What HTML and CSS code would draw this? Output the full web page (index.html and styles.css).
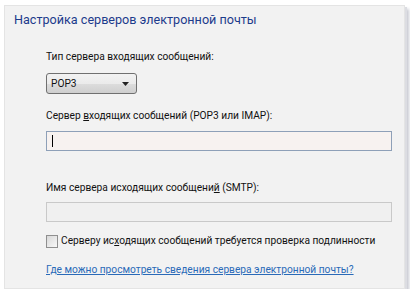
FILE: index.html
```html
<!DOCTYPE html>
<html lang="ru">
<head>
    <meta charset="UTF-8">
    <title>Настройка серверов электронной почты</title>
    <link rel="stylesheet" href="styles.css">
</head>
<body>
    <div class="panel">
        <h1 class="title">Настройка серверов электронной почты</h1>

        <div class="form">
            <label class="label">Тип сервера входящих сообщений:</label>
            <div class="select">
                <span>POP3</span>
                <svg width="7" height="4" viewBox="0 0 7 4"><path d="M0 0h7L3.5 4z" fill="#222"/></svg>
            </div>

            <label class="label gap">Сервер <u>в</u>ходящих сообщений (POP3 или IMAP):</label>
            <div class="input active"><span class="caret"></span></div>

            <label class="label gap-lg">Имя сервера исходящих сообщени<u>й</u> (SMTP):</label>
            <div class="input disabled"></div>

            <div class="check">
                <span class="box"></span>
                <span>Серверу ис<u>х</u>одящих сообщений требуется проверка подлинности</span>
            </div>

            <a class="link" href="#">Где можно просмотреть сведения сервера электронной почты?</a>
        </div>
    </div>
</body>
</html>
```

FILE: styles.css
```css
body{
    margin:0;
    background:#fff;
    font-family:Roboto,"Noto Sans",sans-serif;
    font-size:10.2px;
    color:#111;
}

.panel{
    margin:5px 5px 0 4px;
    height:284px;
    box-sizing:border-box;
    background:#f2f2f2;
    border:1px solid #e4e4e4;
    box-shadow:2px 2px 0 #dcdde2, 4px 4px 3px #c8cad2;
    padding:4px 10px 0 9px;
}

.title{
    margin:0;
    font-weight:normal;
    font-size:12.6px;
    color:#1c3b8c;
    line-height:20px;
}

.form{
    display:flex;
    flex-direction:column;
    align-items:flex-start;
    padding:20px 0 0 32px;
}

.label{
    line-height:14px;
}

.gap{
    margin-top:15px;
}
.gap-lg{
    margin-top:30px;
}

.select{
    margin-top:9px;
    width:91px;
    height:21px;
    box-sizing:border-box;
    border:1px solid #707070;
    border-radius:3px;
    background:linear-gradient(#f2f2f2,#ebebeb 50%,#dddddd 51%,#cfcfcf);
    display:flex;
    justify-content:space-between;
    align-items:center;
    padding:0 7px 0 4px;
}

.input{
    margin-top:8px;
    width:346px;
    height:20px;
    box-sizing:border-box;
    border:1px solid #abadb3;
}
.disabled{
    margin-top:7px;
    background:#f0f0f0;
    border-color:#c9c9c9;
}
.active{
    background:#f7f2f0;
    border-color:#8ea0b8;
    display:flex;
    align-items:center;
    padding-left:5px;
}
.caret{
    width:1px;
    height:12px;
    background:#000;
}

.check{
    margin-top:12px;
    display:flex;
    align-items:center;
    gap:3px;
    line-height:14px;
    white-space:nowrap;
}
.box{
    width:10px;
    height:11px;
    border:1px solid #8f8f8f;
    background:linear-gradient(135deg,#d8d8d8,#f8f8f8);
}

.link{
    margin-top:15px;
    color:#2a6ab8;
    line-height:14px;
    white-space:nowrap;
}
```
